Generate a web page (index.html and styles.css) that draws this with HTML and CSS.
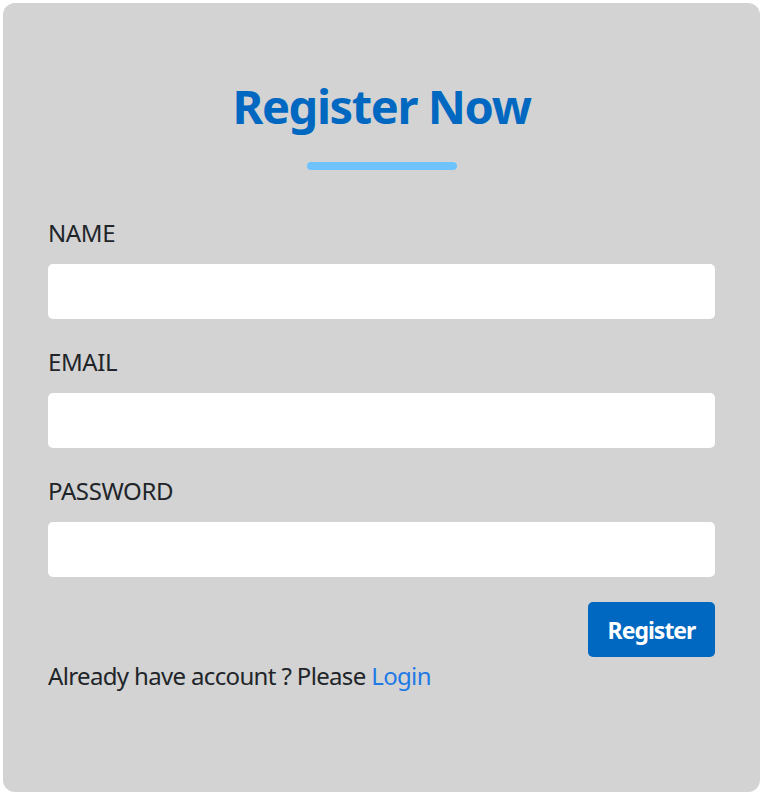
FILE: index.html
```html
<!DOCTYPE html>
<html lang="en">
<head>
<meta charset="utf-8">
<title>Register Now</title>
<link rel="stylesheet" href="styles.css">
</head>
<body>
  <main class="card">
    <h1 class="title">Register Now</h1>
    <div class="title-bar"></div>
    <form class="form">
      <div class="field">
        <label class="label" for="name">NAME</label>
        <input class="input" id="name" type="text">
      </div>
      <div class="field">
        <label class="label" for="email">EMAIL</label>
        <input class="input" id="email" type="email">
      </div>
      <div class="field">
        <label class="label" for="password">PASSWORD</label>
        <input class="input" id="password" type="password">
      </div>
      <div class="actions">
        <button class="btn" type="button">Register</button>
      </div>
    </form>
    <p class="footer-text">Already have account ? Please <a class="link" href="#">Login</a></p>
  </main>
</body>
</html>
```
FILE: styles.css
```css
* { box-sizing: border-box; }
html, body { margin: 0; background: #ffffff; }
body {
  padding: 3px;
  font-family: "Noto Sans", "Open Sans", sans-serif;
  color: #212529;
}
.card {
  width: 757px;
  height: 789px;
  background: #d3d3d3;
  border-radius: 12px;
  padding: 75px 45px 0 45px;
}
.title {
  margin: 0;
  text-align: center;
  font-size: 47px;
  line-height: 56px;
  font-weight: 700;
  letter-spacing: -1.4px;
  color: #0068c1;
}
.title-bar {
  width: 150px;
  height: 8px;
  border-radius: 4px;
  background: #6ec3fe;
  margin: 28px auto 0;
}
.form {
  margin-top: 48px;
  display: flex;
  flex-direction: column;
  gap: 28px;
}
.field {
  display: flex;
  flex-direction: column;
  gap: 16px;
}
.label {
  font-size: 24px;
  line-height: 30px;
  letter-spacing: -0.4px;
}
.input {
  display: block;
  width: 100%;
  height: 55px;
  border: none;
  border-radius: 5px;
  background: #ffffff;
  outline: none;
}
.actions {
  display: flex;
  justify-content: flex-end;
  margin-top: -3px;
}
.btn {
  width: 127px;
  height: 55px;
  border: none;
  border-radius: 5px;
  background: #0068c1;
  color: #ffffff;
  font-family: "Noto Sans", "Open Sans", sans-serif;
  font-size: 23px;
  font-weight: 700;
  letter-spacing: -1px;
  padding: 0;
}
.footer-text {
  margin: 4px 0 0;
  font-size: 24px;
  line-height: 30px;
  letter-spacing: -0.65px;
}
.link {
  color: #1f7ae6;
  text-decoration: none;
}
```
